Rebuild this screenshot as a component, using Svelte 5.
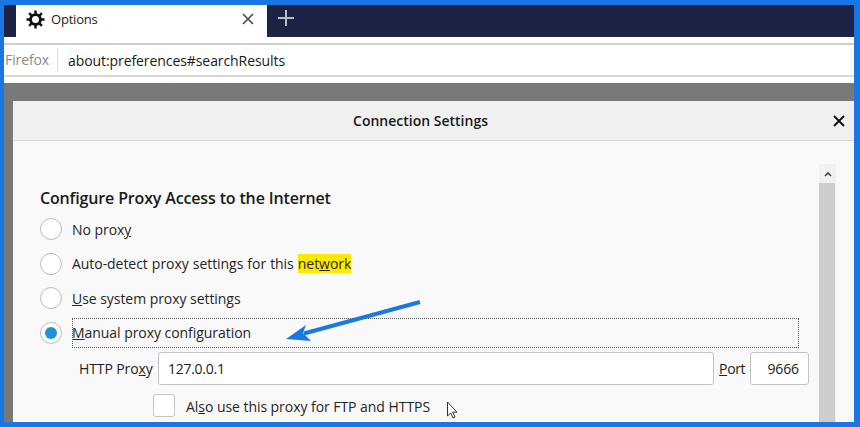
<script>
  const radios = [
    { pre: "No prox", key: "y", post: "" },
    { pre: "Auto-detect proxy settings for this ", mark: true },
    { pre: "", key: "U", post: "se system proxy settings" },
  ];
</script>

<div class="frame">
  <div class="tabbar">
    <div class="tab">
      <svg class="gear" viewBox="0 0 20 20" width="20" height="20">
        <circle cx="10" cy="10" r="5.200" fill="none" stroke="#111" stroke-width="3" />
        <path
          d="M10 0.500v4M10 15.500v4M0.500 10h4M15.500 10h4M3.300 3.300l2.800 2.800M13.900 13.900l2.800 2.800M16.700 3.300l-2.800 2.800M6.100 13.900l-2.800 2.800"
          stroke="#111"
          stroke-width="2.600"
          fill="none"
        />
      </svg>
      <span class="tabtitle">Options</span>
      <svg class="tabclose" viewBox="0 0 12 12" width="12" height="12">
        <path d="M1 1l10 10M11 1L1 11" stroke="#444" stroke-width="1.5" fill="none" />
      </svg>
    </div>
    <svg class="plus" viewBox="0 0 16 16" width="16" height="16">
      <path d="M8 0v16M0 8h16" stroke="#b9bbc6" stroke-width="2" fill="none" />
    </svg>
  </div>

  <div class="tabgap"></div>

  <div class="urlbar">
    <span class="brand">Firefox</span>
    <span class="url">about:preferences#searchResults</span>
  </div>

  <div class="urlgap"></div>

  <div class="backdrop">
    <div class="dialog">
      <div class="dialoghead">
        <span class="dialogtitle">Connection Settings</span>
        <svg class="dialogclose" viewBox="0 0 12 12" width="12" height="12">
          <path d="M1 1l10 10M11 1L1 11" stroke="#111" stroke-width="1.900" fill="none" />
        </svg>
      </div>

      <div class="dialogbody">
        <div class="content">
          <h2>Configure Proxy Access to the Internet</h2>

          {#each radios as r}
            <div class="row">
              <span class="radio"></span>
              <span class="label" class:auto={r.mark}>
                {r.pre}{#if r.key}<u>{r.key}</u>{/if}{r.post ?? ""}{#if r.mark}<mark>net<u>w</u>ork</mark>{/if}
              </span>
            </div>
          {/each}

          <div class="row manual">
            <span class="radio on"></span>
            <span class="label focus"><u>M</u>anual proxy configuration</span>
          </div>

          <div class="proxyrow">
            <span class="plabel">HTTP Pro<u>x</u>y</span>
            <div class="input host">127.0.0.1</div>
            <span class="portlabel"><u>P</u>ort</span>
            <div class="input port">9666</div>
          </div>

          <div class="checkrow">
            <span class="check"></span>
            <span class="label also">Al<u>s</u>o use this proxy for FTP and HTTPS</span>
          </div>
        </div>

        <div class="scrollbar">
          <div class="scrollup">
            <svg viewBox="0 0 8 6" width="8" height="6">
              <path d="M1 5l3-3 3 3" stroke="#444" stroke-width="1.600" fill="none" />
            </svg>
          </div>
          <div class="scrollthumb"></div>
        </div>
      </div>
    </div>
  </div>

  <!-- annotation drawn over the screenshot -->
  <svg class="arrow" viewBox="0 0 860 427" width="860" height="427">
    <path d="M420 302L304 333.500" stroke="#1b78e2" stroke-width="4" fill="none" />
    <path d="M286 339L306 325L303 333L311 341Z" fill="#1b78e2" />
    <path
      d="M447.500 402v14l3.200-3 2.300 5 2-1-2.300-4.800h4.300z"
      fill="#fff"
      stroke="#333"
      stroke-width="1"
    />
  </svg>
</div>

<style>
  :global(body) {
    margin: 0;
  }
  .frame {
    position: relative;
    box-sizing: border-box;
    width: 860px;
    height: 427px;
    overflow: hidden;
    display: flex;
    flex-direction: column;
    border-style: solid;
    border-color: #1a76e2;
    border-width: 5px 6px 5px 4px;
    background: #fff;
    font-family: "Open Sans", "Noto Sans", sans-serif;
    color: #222;
    font-size: 14px;
  }

  /* tab strip */
  .tabbar {
    height: 32px;
    flex: none;
    display: flex;
    align-items: center;
    padding-left: 12px;
    background: #1c2345;
  }
  .tab {
    width: 251px;
    height: 32px;
    box-sizing: border-box;
    display: flex;
    align-items: center;
    padding: 0 13px 4px 10px;
    background: #fff;
  }
  .gear {
    width: 19px;
    height: 19px;
  }
  .tabtitle {
    margin-left: 6px;
    flex: 1;
    font-size: 13px;
    letter-spacing: -0.2px;
  }
  .plus {
    margin-left: 11px;
    margin-bottom: 6px;
  }
  .tabgap {
    height: 6px;
    flex: none;
    border-bottom: 2px solid #cfcfcf;
    box-sizing: content-box;
  }

  /* url bar */
  .urlbar {
    height: 30px;
    flex: none;
    display: flex;
    align-items: center;
    background: #fff;
    padding-left: 1px;
  }
  .brand {
    width: 53px;
    box-sizing: border-box;
    color: #8c8c8c;
    font-size: 14px;
    letter-spacing: -0.1px;
    border-right: 1px solid #ddd;
    line-height: 24px;
  }
  .url {
    margin-left: 10px;
    font-size: 14px;
    letter-spacing: -0.08px;
    color: #1a1a1a;
  }
  .urlgap {
    height: 6px;
    flex: none;
    border-top: 2px solid #d8d8d8;
  }

  /* dialog */
  .backdrop {
    flex: 1;
    min-height: 0;
    background: #787878;
    padding: 18px 0 0 9px;
  }
  .dialog {
    height: 100%;
    background: #f9f9f9;
    border-radius: 3px 0 0 0;
  }
  .dialoghead {
    height: 40px;
    box-sizing: border-box;
    display: flex;
    align-items: center;
    justify-content: center;
    padding-right: 26px;
    position: relative;
    background: #f0f0f0;
    border-bottom: 1px solid #d8d8d8;
  }
  .dialogtitle {
    font-size: 14px;
    font-weight: 600;
    letter-spacing: 0;
    color: #1a1a1a;
  }
  .dialogclose {
    position: absolute;
    right: 9px;
    top: 14px;
  }
  .dialogbody {
    display: flex;
    justify-content: space-between;
    padding: 23px 18px 0 27px;
  }
  .content {
    width: 769px;
    padding-top: 22px;
  }
  h2 {
    margin: 0 0 2px;
    font-size: 16px;
    font-weight: 600;
    line-height: 24px;
    letter-spacing: -0.15px;
    color: #1a1a1a;
  }
  .row {
    display: flex;
    align-items: center;
    height: 34.500px;
  }
  .radio {
    flex: none;
    width: 22px;
    height: 22px;
    box-sizing: border-box;
    border: 1px solid #bdbdbd;
    border-radius: 50%;
    background: #fff;
    margin-right: 10px;
    display: flex;
    align-items: center;
    justify-content: center;
  }
  .radio.on::after {
    content: "";
    width: 12px;
    height: 12px;
    border-radius: 50%;
    background: #2191da;
  }
  .label {
    font-size: 14px;
    letter-spacing: -0.05px;
    color: #262626;
  }
  .auto {
    word-spacing: 0.5px;
  }
  .also {
    padding-top: 2px;
  }
  .focus {
    display: block;
    width: 727px;
    height: 30px;
    line-height: 30px;
    box-sizing: border-box;
    outline: 1px dotted #555;
    outline-offset: -1px;
  }
  mark {
    background: #ffe900;
    color: inherit;
  }
  .proxyrow {
    display: flex;
    align-items: center;
    margin-top: 2px;
    padding-left: 39px;
  }
  .plabel {
    width: 79px;
    font-size: 14px;
    letter-spacing: -0.1px;
  }
  .input {
    height: 33px;
    box-sizing: border-box;
    line-height: 31px;
    border: 1px solid #c4c4c4;
    border-radius: 3px;
    background: #fff;
    font-size: 14px;
    letter-spacing: -0.1px;
  }
  .host {
    width: 557px;
    padding-left: 9px;
    letter-spacing: -0.25px;
  }
  .portlabel {
    width: 36px;
    padding-left: 5px;
    box-sizing: border-box;
    letter-spacing: -0.4px;
  }
  .port {
    width: 59px;
    padding-right: 9px;
    text-align: right;
  }
  .checkrow {
    display: flex;
    align-items: center;
    margin-top: 9px;
    padding-left: 113px;
  }
  .check {
    width: 22px;
    height: 23px;
    flex: none;
    box-sizing: border-box;
    border: 1px solid #c4c4c4;
    border-radius: 3px;
    background: #fff;
    margin-right: 11px;
  }

  /* scrollbar */
  .scrollbar {
    width: 17px;
    flex: none;
    height: 260px;
    background: #f1f1f1;
  }
  .scrollup {
    height: 19px;
    display: flex;
    align-items: center;
    justify-content: center;
  }
  .scrollthumb {
    width: 16px;
    height: 241px;
    background: #cdcdcd;
  }

  .arrow {
    position: absolute;
    left: -4px;
    top: -5px;
    pointer-events: none;
  }
</style>
